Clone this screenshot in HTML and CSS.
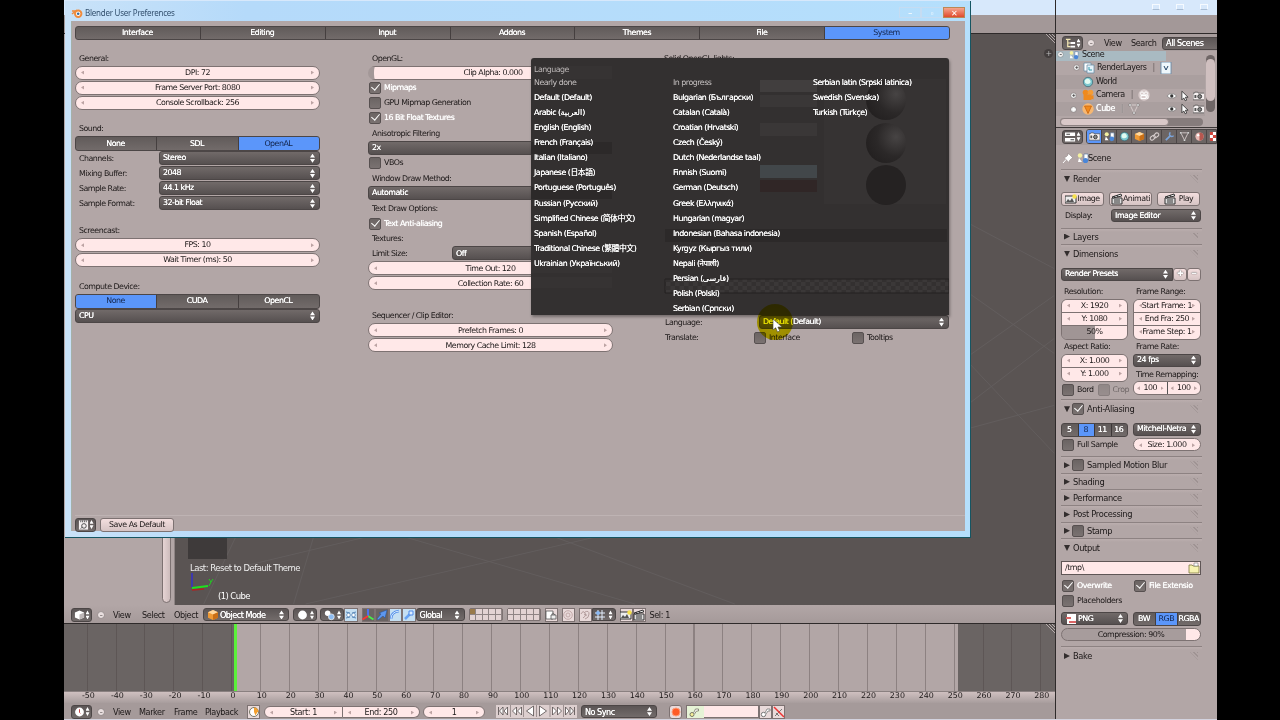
FILE: index.html
```html
<!DOCTYPE html>
<html lang="en">
<head>
  <meta charset="UTF-8">
  <title>Blender User Preferences</title>
  <link rel="stylesheet" href="styles.css">
</head>
<body>
  <!-- icons -->
  <svg class="defs">
    <symbol id="i-blender" viewBox="0 0 12 12"><path d="M1 7l5-4M1 4h6" stroke="#f08b3c" stroke-width="1.5"/><circle cx="7.2" cy="6.8" r="3.2" fill="#fff" stroke="#f08b3c" stroke-width="2"/><circle cx="7.2" cy="6.8" r="1.3" fill="#356a9c"/></symbol>
    <symbol id="i-camera" viewBox="0 0 12 12"><path d="M0 3h1.500l.5-1h3l.5 1H12v7H0z" fill="#f6f1f1" stroke="#444" stroke-width=".7"/><circle cx="7" cy="6.500" r="2" fill="#888" stroke="#333"/><path d="M1.500 5h2v3h-2z" fill="#555"/></symbol>
    <symbol id="i-prefs" viewBox="0 0 12 12"><path d="M1 1h10v10H1z" fill="#f6f1f1"/><path d="M3 1v2M5 1v2M7 1v2M9 1v2" stroke="#555"/><circle cx="6.500" cy="7" r="2.500" fill="none" stroke="#444"/><path d="M3 10l2-2" stroke="#444"/></symbol>
    <symbol id="i-image" viewBox="0 0 12 12"><path d="M0 3h11v7H0z" fill="#eee" stroke="#333"/><path d="M1 9l2-3 2 2 2-3 2 4z" fill="#555"/><circle cx="9.500" cy="3.500" r="2.200" fill="#f6e14d"/></symbol>
    <symbol id="i-clap" viewBox="0 0 12 12"><path d="M1 5h10v6H1z" fill="#ddd" stroke="#333"/><path d="M1 4l9-3 .7 2L2 5z" fill="#eee" stroke="#333"/><path d="M3 3l1 2M6 2l1 2M3 7h6M3 9h6" stroke="#333"/></symbol>
    <symbol id="i-scene" viewBox="0 0 12 12"><path d="M7 2h4v6H7z" fill="#fff" stroke="#4d6f9c" stroke-width=".6"/><circle cx="3" cy="3.500" r="2.200" fill="#f4f0a0"/><circle cx="8.500" cy="8.500" r="2.600" fill="#4a86d8"/><path d="M2 6l3 4H1z" fill="#fff"/></symbol>
    <symbol id="i-layers" viewBox="0 0 12 12"><path d="M1 1h7v8H1z" fill="#fff" stroke="#6d8fa8" stroke-width=".8"/><path d="M4 3h7v8H4z" fill="#e6f3fb" stroke="#6d8fa8" stroke-width=".8"/><path d="M6 5v3h3" stroke="#39a" fill="none"/></symbol>
    <symbol id="i-photo" viewBox="0 0 12 12"><path d="M1 0h10v12H1z" fill="#eef7fc" stroke="#5f87a5" stroke-width=".8"/><path d="M4 4l2 4 2-4" stroke="#246" fill="none"/></symbol>
    <symbol id="i-world" viewBox="0 0 12 12"><circle cx="6" cy="6" r="4.700" fill="#7cc7cf" stroke="#35626e" stroke-width=".7"/><path d="M3 4q3-3 5 0t-2 4q-4 0-3-4" fill="#e2fbf2"/></symbol>
    <symbol id="i-cube" viewBox="0 0 12 12"><path d="M6 1l5 2.300v5.500L6 11 1 8.800V3.300z" fill="#ef9a35"/><path d="M6 1l5 2.300L6 5.500 1 3.300z" fill="#ffd9a0"/><path d="M6 5.500V11l5-2.200V3.300z" fill="#c96f16"/></symbol>
    <symbol id="i-whitecube" viewBox="0 0 12 12"><path d="M6 1l5 2.300v5.500L6 11 1 8.800V3.300z" fill="#fff"/><path d="M6 5.500V11l5-2.200V3.300z" fill="#bdb6b6"/></symbol>
    <symbol id="i-cam" viewBox="0 0 12 12"><circle cx="3.500" cy="3.500" r="2.800" fill="#ef8a1e"/><circle cx="8.500" cy="3.500" r="2.800" fill="#f59c35"/><path d="M1.500 5.500h8v5.500h-8zM9 7l2.500-1v4.500L9 9.500z" fill="#ef8a1e"/></symbol>
    <symbol id="i-camdata" viewBox="0 0 12 12"><circle cx="6" cy="6" r="5.700" fill="#d9cccc"/><circle cx="4" cy="4.500" r="1.600" fill="none" stroke="#fff"/><circle cx="8" cy="4.500" r="1.600" fill="none" stroke="#fff"/><path d="M3 6.500h5v3H3zM8 7.500l2-1v3l-2-1" fill="none" stroke="#fff"/></symbol>
    <symbol id="i-mesh" viewBox="0 0 12 12"><path d="M2 2h8L6 10z" fill="none" stroke="#d6cccc"/><path d="M1 1h2v2H1zM9 1h2v2H9zM5 9h2v2H5z" fill="#fff" stroke="#555" stroke-width=".4"/></symbol>
    <symbol id="i-obj" viewBox="0 0 12 12"><circle cx="6" cy="6" r="5.700" fill="#f6b772"/><path d="M2.500 3h7L6 10.500z" fill="#f28a1d" stroke="#c9640c" stroke-width=".8"/></symbol>
    <symbol id="i-eye" viewBox="0 0 12 12"><path d="M1 6q5-5 10 0-5 5-10 0z" fill="#fff" stroke="#555" stroke-width=".5"/><circle cx="6" cy="6" r="1.700" fill="#333"/></symbol>
    <symbol id="i-cursor" viewBox="0 0 12 12"><path d="M3 1v9l2-2 1.500 3 1.500-.7L6.700 7.300H9.500z" fill="#fff" stroke="#222" stroke-width=".8"/></symbol>
    <symbol id="i-link" viewBox="0 0 12 12"><path d="M2 9.500a2 2 0 0 1 0-3l2-1.500a2 2 0 0 1 3 2L5 9a2 2 0 0 1-3 .5zM10 2.500a2 2 0 0 1 0 3L8 7a2 2 0 0 1-3-2l2-2a2 2 0 0 1 3-.5z" fill="none" stroke="#d3caca" stroke-width="1.200"/></symbol>
    <symbol id="i-wrench" viewBox="0 0 12 12"><path d="M2 10l5-5" stroke="#7ba3d8" stroke-width="2"/><path d="M7 1.500a2.500 2.500 0 1 0 3.500 3.500" fill="none" stroke="#7ba3d8" stroke-width="1.600"/></symbol>
    <symbol id="i-mat" viewBox="0 0 12 12"><circle cx="6" cy="6" r="4.500" fill="#e8b9b4"/><path d="M6 1.500a4.500 4.500 0 0 1 0 9z" fill="#b6574f"/><circle cx="4.500" cy="4.500" r="1.300" fill="#fff"/></symbol>
    <symbol id="i-check" viewBox="0 0 12 12"><path d="M1 1h10v10H1z" fill="#fff"/><path d="M1 1h3.300v3.300H1zM7.700 1H11v3.300H7.700zM4.300 4.300h3.400v3.400H4.300zM1 7.700h3.300V11H1zM7.700 7.700H11V11H7.700z" fill="#d1453b"/></symbol>
    <symbol id="i-tree" viewBox="0 0 12 12"><path d="M1 2h5M3 2v8h3M3 6h3" stroke="#f5e9b6" stroke-width="1.300" fill="none"/><path d="M6 5h5v2H6zM6 9h5v2H6z" fill="#fff"/></symbol>
    <symbol id="i-props" viewBox="0 0 12 12"><path d="M0 1h11v4H0zM0 7h11v4H0z" fill="#fff"/><path d="M1.500 3h4M6 9h4" stroke="#444" stroke-width="1.300"/></symbol>
    <symbol id="i-pin" viewBox="0 0 12 12"><path d="M1 11l3.500-4" stroke="#fff"/><path d="M6 1l5 5-1.500.5-2 2L7 10.500 2 5.500l2-.5 2-2z" fill="#fff" stroke="#8a7f7f" stroke-width=".5"/></symbol>
    <symbol id="i-clock" viewBox="0 0 12 12"><circle cx="6" cy="6" r="4.800" fill="#fff"/><path d="M6 3v3.500l1 1" stroke="#b33" fill="none"/></symbol>
    <symbol id="i-sphere" viewBox="0 0 12 12"><circle cx="6" cy="6" r="4.800" fill="#fff"/></symbol>
    <symbol id="i-pivot" viewBox="0 0 12 12"><circle cx="4" cy="4" r="3" fill="#fff"/><circle cx="8" cy="8" r="3.200" fill="#8ebcf0" stroke="#fff" stroke-width=".7"/></symbol>
    <symbol id="i-center" viewBox="0 0 12 12"><path d="M1 3l4 1M11 3L7 4M1 9l4-1M11 9L7 8" stroke="#5a87b8"/><circle cx="3.500" cy="6" r="1.800" fill="#fff" stroke="#5a87b8" stroke-width=".8"/><circle cx="8.500" cy="6" r="1.800" fill="#fff" stroke="#5a87b8" stroke-width=".8"/></symbol>
    <symbol id="i-manip" viewBox="0 0 12 12"><path d="M6 7V0" stroke="#4d72ff" stroke-width="1.800"/><path d="M6 7l5.500 3.500" stroke="#4bec4b" stroke-width="2"/><path d="M6 7L.5 10.500" stroke="#f33" stroke-width="2"/></symbol>
    <symbol id="i-arrow" viewBox="0 0 12 12"><path d="M1 10l4-5-2-1 8-3-2 8-2-2-5 4z" fill="#5d97ef" stroke="#234f9c" stroke-width=".5"/></symbol>
    <symbol id="i-arc" viewBox="0 0 12 12"><path d="M2 10Q2 3 10 2" fill="none" stroke="#4d89e8" stroke-width="2.500"/><path d="M2 10Q2 3 10 2" fill="none" stroke="#d8ecff"/></symbol>
    <symbol id="i-scale" viewBox="0 0 12 12"><path d="M2 10l5-5" stroke="#69a3f2" stroke-width="2.500"/><path d="M6 2h4v4H6z" fill="#dcecff" stroke="#4d89e8"/></symbol>
    <symbol id="i-lock" viewBox="0 0 12 12"><path d="M1 2h7v8H1z" fill="#fff" stroke="#555" stroke-width=".8"/><path d="M6 6h5v4H6z" fill="#eee" stroke="#555" stroke-width=".8"/><path d="M7 6q0-4 3 0" fill="none" stroke="#555" stroke-width=".8"/></symbol>
    <symbol id="i-ring" viewBox="0 0 12 12"><circle cx="6" cy="6" r="4.300" fill="none" stroke="#c3a9a9"/><circle cx="6" cy="6" r="2" fill="none" stroke="#c3a9a9"/></symbol>
    <symbol id="i-magnet" viewBox="0 0 12 12"><path d="M2 5q2-4 4-1T4 9M6 3q4-2 4 2T6 10M5 6q3-2 2 1" fill="none" stroke="#b39c9c"/></symbol>
    <symbol id="i-grid" viewBox="0 0 12 12"><path d="M4 1v10M8 1v10M1 4h10M1 8h10" stroke="#e6f0ff" stroke-width="1"/><circle cx="4" cy="4" r="2" fill="#8ab8f4"/></symbol>
    <symbol id="i-folder" viewBox="0 0 12 12"><path d="M1 3h3l1 1h6v7H1z" fill="#f7f2b0" stroke="#7c7740" stroke-width=".8"/><path d="M6 1h4v3H6z" fill="#fff" stroke="#777" stroke-width=".6"/></symbol>
    <symbol id="i-png" viewBox="0 0 12 12"><path d="M2 1h9v10H2z" fill="#fff"/><path d="M1 4h5v2H1zM4 8h7v2H4z" fill="#d66"/></symbol>
    <symbol id="i-key" viewBox="0 0 12 12"><circle cx="3.500" cy="8.500" r="2.200" fill="#fff" stroke="#777"/><path d="M5 7l2-4h3v2H8L6 8" fill="#fff" stroke="#777" stroke-width=".8"/></symbol>
    <symbol id="i-keyset" viewBox="0 0 17 12"><path d="M0 0h17v12H0z" fill="#e6f3d6"/><circle cx="5" cy="8.500" r="2" fill="#f7f29a" stroke="#776"/><path d="M6.500 7l2-4h3v2h-2l-2 3" fill="#fff" stroke="#776" stroke-width=".8"/></symbol>
    <symbol id="i-rec" viewBox="0 0 12 12"><circle cx="6" cy="6" r="4" fill="#ff5a26" stroke="#ff9a77"/></symbol>
    <symbol id="i-range" viewBox="0 0 12 12"><circle cx="6" cy="6" r="4.500" fill="#fff" stroke="#776" stroke-width="1"/><path d="M6 6V1.500A4.500 4.500 0 0 1 10.500 6zM6 6H9.500L7.500 9.500z" fill="#f4a030"/></symbol>
    <symbol id="i-grip" viewBox="0 0 9 9"><path d="M0 0l9 9M3 0l6 6M6 0l3 3" stroke="#d8cece" stroke-width=".7"/><path d="M1.500 0L9 7.500M4.500 0L9 4.500" stroke="#4a4444" stroke-width=".7"/></symbol>
  </svg>

  <div class="screen">
    <div class="main-row">
      <div class="left-area">
        <div class="aero-bar"></div>
        <div class="info-bar"></div>
        <div class="viewport">
          <div class="shelf"><div class="shelf-scroll"></div></div>
          <div class="view3d">
            <svg class="floor" width="880" height="572" viewBox="0 0 880 572">
              <g stroke="#625d5d" stroke-width="1" fill="none">
                <path d="M795 190L880 235M795 322L880 262M795 370L880 305M795 395L880 372M795 330L880 420M795 260L880 320"/>
                <path d="M28 571L60 504M118 571L138 504M60 535L190 504M130 571L420 504M230 504L460 571M380 504L560 571"/>
              </g>
            </svg>
            <svg class="grip"><use href="#i-grip"/></svg>
            <div class="ghost-box"></div>
            <span class="plus-tab">+</span>
            <div class="last-op">Last: Reset to Default Theme</div>
            <svg class="axis" width="32" height="28" viewBox="0 0 32 28"><path d="M3 16V2" stroke="#3430c8" stroke-width="1.500"/><path d="M3 19l12-1" stroke="#b32020" stroke-width="1.500"/><path d="M3 17l16-2" stroke="#1fe01f" stroke-width="1.800"/><path d="M20 8l2 3 2-3M22 11l-2 4" stroke="#1fd01f" fill="none"/></svg>
            <div class="obj-name">(1) Cube</div>
          </div>
        </div>
        <div class="view-header">
          <span class="select ed"><svg><use href="#i-whitecube"/></svg></span>
          <span class="minus">–</span>
          <span class="menu m-view">View</span><span class="menu m-select">Select</span><span class="menu m-object">Object</span>
          <span class="select mode"><svg><use href="#i-cube"/></svg>Object Mode</span>
          <span class="select shade"><svg><use href="#i-sphere"/></svg></span>
          <span class="select pivot"><svg><use href="#i-pivot"/></svg></span>
          <span class="ib sky"><svg><use href="#i-center"/></svg></span>
          <span class="ib dk first"><svg><use href="#i-manip"/></svg></span>
          <span class="ib dk"><svg><use href="#i-arrow"/></svg></span>
          <span class="ib sky"><svg><use href="#i-arc"/></svg></span>
          <span class="ib sky"><svg><use href="#i-scale"/></svg></span>
          <span class="select global">Global</span>
          <span class="layers"><i class="on"></i><i></i><i></i><i></i><i></i><i></i><i></i><i></i><i></i><i></i></span>
          <span class="layers second"><i></i><i></i><i></i><i></i><i></i><i></i><i></i><i></i><i></i><i></i></span>
          <span class="ib g4"><svg><use href="#i-lock"/></svg></span>
          <span class="ib g4"><svg><use href="#i-ring"/></svg></span>
          <span class="ib g4"><svg><use href="#i-magnet"/></svg></span>
          <span class="select snap"><svg><use href="#i-grid"/></svg></span>
          <span class="ib g4"><svg><use href="#i-image"/></svg></span>
          <span class="ib"><svg><use href="#i-clap"/></svg></span>
          <span class="menu sel">Sel: 1</span>
        </div>
        <div class="timeline">
          <div class="before"></div><div class="cursor"></div><div class="range"></div><div class="after"></div>
          <svg class="grip"><use href="#i-grip"/></svg>
        </div>
        <div class="ruler">
          <span>-50</span><span>-40</span><span>-30</span><span>-20</span><span>-10</span><span>0</span><span>10</span><span>20</span><span>30</span><span>40</span><span>50</span><span>60</span><span>70</span><span>80</span><span>90</span><span>100</span><span>110</span><span>120</span><span>130</span><span>140</span><span>150</span><span>160</span><span>170</span><span>180</span><span>190</span><span>200</span><span>210</span><span>220</span><span>230</span><span>240</span><span>250</span><span>260</span><span>270</span><span>280</span>
        </div>
        <div class="time-header">
          <span class="select ed"><svg><use href="#i-clock"/></svg></span>
          <span class="minus">–</span>
          <span class="menu m-view">View</span><span class="menu m-marker">Marker</span><span class="menu m-frame">Frame</span><span class="menu m-play">Playback</span>
          <span class="ib range-btn"><svg><use href="#i-range"/></svg></span>
          <span class="num t-start">Start: 1</span><span class="num t-end">End: 250</span>
          <span class="num t-cur">1</span>
          <span class="play">
            <svg viewBox="0 0 80 12"><path d="M14 0v12M27 0v12M40 0v12M53.500 0v12M67 0v12" stroke="#8d8282" stroke-width=".8"/><g fill="#fff" stroke="#544d4d" stroke-width=".8"><path d="M2 2v8M6.500 2L3 6l3.500 4zM11 2L7.500 6l3.500 4zM20 2l-4 4 4 4zM25 2l-4 4 4 4zM37 1l-7 5 7 5zM43 1l7 5-7 5zM56 2l4 4-4 4zM61 2l4 4-4 4zM69 2l3.500 4-3.500 4zM73.500 2L77 6l-3.500 4zM78 2v8"/></g></svg>
          </span>
          <span class="select sync">No Sync</span>
          <span class="ib rec"><svg><use href="#i-rec"/></svg></span>
          <span class="keyset"><svg><use href="#i-keyset"/></svg></span>
          <span class="ib"><svg><use href="#i-key"/></svg></span>
          <span class="ib last"><svg viewBox="0 0 12 12"><path d="M2 10l7-7M3 7l3 3" stroke="#777"/><path d="M1 1l10 10" stroke="#e33" stroke-width="1.500"/></svg></span>
        </div>
      </div>

      <div class="side">
        <div class="aero-bar"><i></i><i></i><i></i></div>
        <div class="info-bar"></div>
        <div class="out-header">
          <span class="select ed"><svg><use href="#i-tree"/></svg></span>
          <span class="minus">–</span>
          <span class="menu s-view">View</span><span class="menu s-search">Search</span>
          <span class="select scenes">All Scenes</span>
        </div>
        <div class="outliner">
          <div class="tree">
            <div class="node scene"><b class="dot">–</b><svg><use href="#i-scene"/></svg>Scene</div>
            <div class="node n1"><b class="dot">+</b><svg><use href="#i-layers"/></svg>RenderLayers <em>|</em><svg><use href="#i-photo"/></svg></div>
            <div class="node n2"><svg><use href="#i-world"/></svg>World</div>
            <div class="node n3"><b class="dot">+</b><svg><use href="#i-cam"/></svg>Camera <em>|</em><svg><use href="#i-camdata"/></svg><span class="eyes"><svg><use href="#i-eye"/></svg><svg><use href="#i-cursor"/></svg><svg><use href="#i-camera"/></svg></span></div>
            <div class="node n3 white"><b class="dot">+</b><svg><use href="#i-obj"/></svg>Cube <em>|</em><svg><use href="#i-mesh"/></svg><span class="eyes"><svg><use href="#i-eye"/></svg><svg><use href="#i-cursor"/></svg><svg><use href="#i-camera"/></svg></span></div>
            <div class="hscroll"><i></i></div>
          </div>
          <div class="vscroll"><i></i></div>
        </div>
        <div class="prop-header">
          <span class="select ed"><svg><use href="#i-props"/></svg></span>
          <span class="tabs">
            <i class="active"><svg><use href="#i-camera"/></svg></i><i><svg><use href="#i-scene"/></svg></i><i><svg><use href="#i-world"/></svg></i><i><svg><use href="#i-cube"/></svg></i><i><svg><use href="#i-link"/></svg></i><i><svg><use href="#i-wrench"/></svg></i><i><svg><use href="#i-mesh"/></svg></i><i><svg><use href="#i-mat"/></svg></i><i><svg><use href="#i-check"/></svg></i>
          </span>
        </div>
        <div class="panels">
          <div class="context"><svg><use href="#i-pin"/></svg><svg><use href="#i-scene"/></svg>Scene</div>
          <section class="panel render">
            <h3 class="open">Render</h3>
            <div class="btns"><span class="btn"><svg><use href="#i-image"/></svg>Image</span><span class="btn"><svg><use href="#i-clap"/></svg>Animati</span><span class="btn play-btn"><svg><use href="#i-clap"/></svg>Play</span></div>
            <div class="line"><label>Display:</label><span class="select grow">Image Editor</span></div>
          </section>
          <section class="panel"><h3>Layers</h3></section>
          <section class="panel dims">
            <h3 class="open">Dimensions</h3>
            <div class="line presets"><span class="select grow">Render Presets</span><span class="btn sq">✚</span><span class="btn sq">━</span></div>
            <div class="cols">
              <div>
                <label>Resolution:</label>
                <div class="stack"><span class="num">X: 1920</span><span class="num">Y: 1080</span><span class="num half">50%</span></div>
                <label>Aspect Ratio:</label>
                <div class="stack"><span class="num">X: 1.000</span><span class="num">Y: 1.000</span></div>
                <div class="line crop"><span class="cb">Bord</span><span class="cb off">Crop</span></div>
              </div>
              <div>
                <label>Frame Range:</label>
                <div class="stack"><span class="num">Start Frame: 1</span><span class="num">End Fra: 250</span><span class="num">Frame Step: 1</span></div>
                <label>Frame Rate:</label>
                <span class="select">24 fps</span>
                <label class="remap">Time Remapping:</label>
                <div class="stack pair"><span class="num">100</span><span class="num">100</span></div>
              </div>
            </div>
          </section>
          <section class="panel aa">
            <h3 class="open"><span class="cb on"></span>Anti-Aliasing</h3>
            <div class="cols">
              <div><div class="seg"><span>5</span><span class="active">8</span><span>11</span><span>16</span></div><div class="line"><span class="cb">Full Sample</span></div></div>
              <div><span class="select">Mitchell-Netra</span><span class="num size">Size: 1.000</span></div>
            </div>
          </section>
          <section class="panel"><h3><span class="cb"></span>Sampled Motion Blur</h3></section>
          <section class="panel"><h3>Shading</h3></section>
          <section class="panel"><h3>Performance</h3></section>
          <section class="panel"><h3>Post Processing</h3></section>
          <section class="panel"><h3><span class="cb"></span>Stamp</h3></section>
          <section class="panel output">
            <h3 class="open">Output</h3>
            <div class="path"><span>/tmp\</span><svg><use href="#i-folder"/></svg></div>
            <div class="cols checks"><span class="cb on">Overwrite</span><span class="cb on">File Extensio</span></div>
            <div class="checks"><span class="cb">Placeholders</span></div>
            <div class="cols"><span class="select png"><svg><use href="#i-png"/></svg>PNG</span><div class="seg"><span>BW</span><span class="active">RGB</span><span>RGBA</span></div></div>
            <div class="slider">Compression: 90%</div>
          </section>
          <section class="panel bake"><h3>Bake</h3></section>
        </div>
      </div>
    </div>
  </div>

  <!-- preferences window -->
  <div class="window">
    <div class="titlebar">
      <svg class="logo"><use href="#i-blender"/></svg><span class="title">Blender User Preferences</span>
      <span class="wb">–</span><span class="wb">▫</span><span class="wb close">✕</span>
    </div>
    <div class="client">
      <div class="seg top-tabs"><span>Interface</span><span>Editing</span><span>Input</span><span>Addons</span><span>Themes</span><span>File</span><span class="active">System</span></div>
      <div class="pref-cols">
        <div class="pcol c1">
          <div class="group">
            <label>General:</label>
            <span class="num">DPI: 72</span><span class="num">Frame Server Port: 8080</span><span class="num">Console Scrollback: 256</span>
          </div>
          <div class="group">
            <label>Sound:</label>
            <div class="seg"><span>None</span><span>SDL</span><span class="active">OpenAL</span></div>
            <div class="row"><label>Channels:</label><span class="select">Stereo</span></div>
            <div class="row"><label>Mixing Buffer:</label><span class="select">2048</span></div>
            <div class="row"><label>Sample Rate:</label><span class="select">44.1 kHz</span></div>
            <div class="row"><label>Sample Format:</label><span class="select">32-bit Float</span></div>
          </div>
          <div class="group">
            <label>Screencast:</label>
            <span class="num">FPS: 10</span><span class="num">Wait Timer (ms): 50</span>
          </div>
          <div class="group">
            <label>Compute Device:</label>
            <div class="seg"><span class="active">None</span><span>CUDA</span><span>OpenCL</span></div>
            <span class="select">CPU</span>
          </div>
        </div>
        <div class="pcol c2">
          <div class="group">
            <label>OpenGL:</label>
            <span class="num clip">Clip Alpha: 0.000</span>
            <span class="cb on">Mipmaps</span>
            <span class="cb">GPU Mipmap Generation</span>
            <span class="cb on">16 Bit Float Textures</span>
            <label>Anisotropic Filtering</label>
            <span class="select">2x</span>
            <span class="cb">VBOs</span>
            <label>Window Draw Method:</label>
            <span class="select">Automatic</span>
            <label>Text Draw Options:</label>
            <span class="cb on">Text Anti-aliasing</span>
            <label>Textures:</label>
            <div class="row"><label>Limit Size:</label><span class="select">Off</span></div>
            <span class="num">Time Out: 120</span>
            <span class="num">Collection Rate: 60</span>
          </div>
          <div class="group">
            <label>Sequencer / Clip Editor:</label>
            <span class="num">Prefetch Frames: 0</span>
            <span class="num">Memory Cache Limit: 128</span>
          </div>
        </div>
        <div class="pcol c3">
          <label>Solid OpenGL lights:</label>
          <div class="lang">
            <div class="row"><label>Language:</label><span class="select">Default (Default)</span></div>
            <div class="row translate"><label>Translate:</label><span class="cb">Interface</span><span class="cb">Tooltips</span></div>
          </div>
        </div>
      </div>
      <div class="pref-footer"><span class="select ed"><svg><use href="#i-prefs"/></svg></span><span class="btn">Save As Default</span></div>
    </div>

    <div class="popup">
      <svg class="under" width="418" height="256" viewBox="0 0 418 256">
        <defs>
          <radialGradient id="ball" cx=".75" cy=".35" r=".8"><stop offset="0" stop-color="#474444"/><stop offset=".6" stop-color="#2b2828"/><stop offset="1" stop-color="#232020"/></radialGradient>
          <pattern id="chk" width="9" height="8" patternUnits="userSpaceOnUse"><path d="M0 0h4.500v4H0zM4.500 4H9v4H4.500z" fill="#3b3838"/></pattern>
        </defs>
        <path d="M0 8h81v13H0zM0 204h81v11H0zM0 219h81v11H0z" fill="#363333"/>
        <path d="M0 84h81v12H0zM0 129h81v12H0zM134 171h282v13H134z" fill="#2c2929"/>
        <path d="M293 21h122v125H293z" fill="#363333"/>
        <path d="M229 22h57v12h-57z" fill="#413e3e"/>
        <path d="M229 37h57v12h-57zM229 65h57v13h-57z" fill="#3a3737"/>
        <path d="M229 107h57v13h-57z" fill="#42474a"/><path d="M229 122h57v12h-57z" fill="#302626"/>
        <circle cx="355" cy="42" r="20" fill="url(#ball)"/><circle cx="355" cy="85" r="20" fill="url(#ball)"/><circle cx="355" cy="127" r="20" fill="#252222"/>
        <path d="M134 221h284v14H134z" fill="url(#chk)" stroke="#242121"/>
      </svg>
      <div class="pop-title">Language</div>
      <div class="pop-cols">
        <ul>
          <li class="head">Nearly done</li><li>Default (Default)</li><li>Arabic (العربية)</li><li>English (English)</li><li>French (Français)</li><li>Italian (Italiano)</li><li>Japanese (日本語)</li><li>Portuguese (Português)</li><li>Russian (Русский)</li><li>Simplified Chinese (简体中文)</li><li>Spanish (Español)</li><li>Traditional Chinese (繁體中文)</li><li>Ukrainian (Український)</li>
        </ul>
        <ul>
          <li class="head">In progress</li><li>Bulgarian (Български)</li><li>Catalan (Català)</li><li>Croatian (Hrvatski)</li><li>Czech (Český)</li><li>Dutch (Nederlandse taal)</li><li>Finnish (Suomi)</li><li>German (Deutsch)</li><li>Greek (Ελληνικά)</li><li>Hungarian (magyar)</li><li>Indonesian (Bahasa indonesia)</li><li>Kyrgyz (Кыргыз тили)</li><li>Nepali (नेपाली)</li><li>Persian (فارسی)</li><li>Polish (Polski)</li><li>Serbian (Српски)</li>
        </ul>
        <ul>
          <li>Serbian latin (Srpski latinica)</li><li>Swedish (Svenska)</li><li>Turkish (Türkçe)</li>
        </ul>
      </div>
    </div>
    <div class="halo"></div>
    <svg class="pointer" width="12" height="16" viewBox="0 0 12 16"><path d="M1 1v11l2.700-2.300L5.500 14l2.200-1-1.800-4H10z" fill="#fff" stroke="#443" stroke-width=".6"/></svg>
  </div>
</body>
</html>
```
FILE: styles.css
```css
* {
  box-sizing: border-box;
}
body {
  margin: 0;
  background: #000;
  width: 1280px;
  height: 720px;
  overflow: hidden;
  position: relative;
  font-family: "DejaVu Sans", "Noto Sans CJK SC", "Noto Sans", sans-serif;
  font-size: 7.9px;
  letter-spacing: -0.5px;
  line-height: 12px;
  color: #1c1818;
  white-space: nowrap;
}
i, em {
  font-style: normal;
}
svg {
  width: 12px;
  height: 12px;
  flex: none;
}
.defs {
  position: absolute;
  width: 0;
  height: 0;
}
.screen {
  width: 1153px;
  height: 720px;
  margin-left: 64px;
  background: #b2a6a6;
  border-bottom: 1px solid #d3d3df;
}
.main-row {
  display: flex;
  height: 719px;
}
.left-area {
  width: 992px;
  display: flex;
  flex-direction: column;
  border-right: 1px solid #2e2a2a;
}
.aero-bar {
  height: 15px;
  background: #d7e8fb;
  display: flex;
  justify-content: flex-end;
  gap: 16px;
  padding: 4px 9px 0 0;
  flex: none;
}
.aero-bar i {
  width: 8px;
  height: 6px;
  border: 1px solid #f5faff;
  border-bottom-color: #a9bdd4;
}
.info-bar {
  height: 19px;
  background: #a39898;
  border-bottom: 1px solid #2e2a2a;
  flex: none;
}

/* widgets */
.select {
  display: flex;
  align-items: center;
  position: relative;
  height: 13px;
  padding: 0 3px;
  border: 1px solid #4c4646;
  border-radius: 3px;
  background: linear-gradient(#5b5555, #726b6a);
  color: #fff;
  text-shadow: 0 0 .6px #fff;
}
.pcol .select, .panels .select {
  background: linear-gradient(#716a69, #565050);
}
.select::after {
  content: "";
  position: absolute;
  right: 4px;
  top: 50%;
  margin-top: -4.5px;
  width: 5px;
  height: 9px;
  background: #fff;
  clip-path: polygon(50% 0, 100% 42%, 0 42%, 0 58%, 100% 58%, 50% 100%, 0 58%, 0 42%);
}
.num {
  display: flex;
  align-items: center;
  justify-content: center;
  position: relative;
  height: 13px;
  background: #ffe8e8;
  border: 1px solid #7d7272;
  border-radius: 7px;
}
.num::before, .num::after {
  content: "";
  position: absolute;
  top: 4px;
  width: 3px;
  height: 4px;
  background: #bda4a4;
}
.num::before {
  left: 5px;
  clip-path: polygon(0 50%, 100% 0, 100% 100%);
}
.num::after {
  right: 5px;
  clip-path: polygon(100% 50%, 0 0, 0 100%);
}
.seg {
  display: flex;
  height: 14px;
  border: 1px solid #4c4646;
  border-radius: 3px;
  overflow: hidden;
  background: linear-gradient(#615b5a, #726b6a);
}
.seg span {
  flex: 1;
  display: flex;
  align-items: center;
  justify-content: center;
  padding-right: 1px;
  color: #fff;
  text-shadow: 0 0 .6px #fff;
  border-left: 1px solid #453f3f;
}
.seg span:first-child {
  border-left: 0;
}
.seg .active {
  background: #5b96fa;
  color: #13254c;
  text-shadow: none;
}
.cb {
  display: flex;
  align-items: center;
  position: relative;
}
.cb::before {
  content: "";
  width: 10px;
  height: 10px;
  margin-right: 3px;
  border: 1px solid #575050;
  border-radius: 2px;
  background: linear-gradient(#6b6463, #7a7271);
}
.cb.on {
  color: #fff;
  text-shadow: 0 0 .8px #fff;
}
.cb.on::after {
  content: "";
  position: absolute;
  left: 4px;
  top: 50%;
  width: 4px;
  height: 7px;
  margin-top: -6px;
  border: solid #fff;
  border-width: 0 1.5px 1.5px 0;
  transform: rotate(40deg);
}
.pcol .cb.on::after {
  left: 5px;
}
.cb.off {
  opacity: .45;
}
.btn {
  display: flex;
  align-items: center;
  justify-content: center;
  height: 14px;
  border: 1px solid #7d7272;
  border-radius: 3px;
  background: linear-gradient(#f3dede, #d6c4c4);
}
.minus {
  width: 6px;
  height: 6px;
  line-height: 5px;
  text-align: center;
  border-radius: 50%;
  background: #e8dede;
  box-shadow: 0 0 1px #555;
  font-size: 6px;
}
.ib {
  width: 13px;
  height: 14px;
  border: 1px solid #7d7272;
  background: #e9dada;
  display: flex;
  align-items: center;
  justify-content: center;
}
.ib.sky {
  background: #c5dff2;
}
.ib.dk {
  background: #6a6362;
}
.ed {
  width: 21px;
  height: 14px;
  padding: 0 2px;
}
.ed::after {
  right: 1.5px;
  width: 4px;
}
.ed svg {
  width: 11px;
}
.grip {
  position: absolute;
  right: 0;
  top: 0;
  width: 9px;
  height: 9px;
  z-index: 2;
}

/* 3d view */
.viewport {
  height: 571px;
  display: flex;
}
.shelf {
  width: 111px;
  background: #b2a6a6;
  border-right: 1px solid #8f8585;
  display: flex;
  justify-content: flex-end;
  padding: 0 3px 2px 0;
}
.shelf-scroll {
  width: 9px;
  border: 1px solid #7d7272;
  border-radius: 5px;
  background: linear-gradient(90deg, #e6d4d4, #cdbcbc);
}
.view3d {
  flex: 1;
  background: #5a5453;
  position: relative;
}
.floor {
  width: 880px;
  height: 571px;
}
.ghost-box {
  position: absolute;
  left: 13px;
  top: 500px;
  width: 39px;
  height: 25px;
  background: #3e3a3a;
}
.plus-tab {
  position: absolute;
  right: 2px;
  top: 15px;
  width: 9px;
  height: 9px;
  line-height: 9px;
  text-align: center;
  border-radius: 50%;
  background: #433e3e;
  color: #bbb;
}
.last-op, .obj-name {
  position: absolute;
  color: #efefef;
  font-size: 8.5px;
}
.last-op {
  left: 15px;
  top: 528px;
}
.obj-name {
  left: 43px;
  top: 556px;
  letter-spacing: -.6px;
  color: #fff;
}
.axis {
  position: absolute;
  left: 14px;
  top: 537px;
  width: 32px;
  height: 28px;
}
.view-header, .time-header {
  display: flex;
  align-items: center;
  height: 19px;
  padding-left: 7px;
  background: linear-gradient(#b2a6a6, #a59a9a);
  font-size: 8.1px;
  letter-spacing: -.4px;
}
.view-header > *, .time-header > *, .out-header > * {
  flex: none;
}
.view-header {
  padding-top: 2px;
  border-bottom: 1px solid #2e2a2a;
}
.view-header .minus, .time-header .minus {
  margin-left: 6px;
}
.m-view { width: 29px; margin-left: 9px; }
.m-select { width: 32px; }
.m-object { width: 29px; }
.mode { width: 86px; }
.mode svg { margin-right: 1px; }
.mode, .global, .sync { letter-spacing: -.5px; }
.shade { width: 24px; margin-left: 4px; }
.pivot { width: 24px; margin-left: 3px; }
.shade svg, .pivot svg { width: 11px; }
.shade::after, .pivot::after, .snap::after { right: 2px; width: 4px; }
.ib.sky, .ib.dk { width: 13.5px; }
.ib.first { margin-left: 4px; }
.global { width: 49px; }
.layers {
  display: grid;
  grid-template-columns: repeat(5, 1fr);
  width: 34px;
  height: 13px;
  margin-left: 4px;
  border: 1px solid #7d7272;
  border-radius: 2px;
  background: #8f8484;
  gap: 1px;
}
.layers i {
  background: #e3d3d3;
}
.layers .on {
  background: #9a7a4a;
}
.g4 { margin-left: 4px; }
.snap { width: 24px; padding: 0 1px; border-radius: 0 3px 3px 0; }
.sel { margin-left: 4px; }

/* timeline */
.timeline {
  height: 68px;
  display: flex;
  position: relative;
}
.timeline::after {
  content: "";
  position: absolute;
  inset: 0;
  background: repeating-linear-gradient(90deg, transparent 0 22.6px, rgba(70, 60, 60, .35) 22.6px 23.6px, transparent 23.6px 28.9px);
}
.timeline .before { width: 170px; background: #6a6463; }
.timeline .cursor { width: 3px; background: #5bf03a; z-index: 1; }
.timeline .range { width: 721px; background: #b2a6a6; }
.timeline .after { flex: 1; background: #6a6463; }
.ruler {
  height: 12px;
  display: flex;
  background: linear-gradient(#cfc0c0, #a89d9d);
  border-top: 1px solid #8a8080;
  padding-left: 10px;
  overflow: hidden;
  letter-spacing: 0;
  line-height: 8px;
}
.ruler span {
  width: 28.9px;
  flex: none;
  text-align: center;
}
.time-header {
  height: 16px;
  padding-top: 1px;
  background: #a59a9a;
}
.time-header .m-view { width: 26px; }
.m-marker { width: 35px; }
.m-frame { width: 31px; }
.m-play { width: 42px; }
.time-header .num { height: 12px; }
.t-start { width: 79px; margin-left: 4px; border-radius: 7px 0 0 7px; }
.t-end { width: 77px; border-left: 0; border-radius: 0 7px 7px 0; }
.t-cur { width: 62px; margin-left: 3px; }
.play {
  display: flex;
  width: 81px;
  height: 13px;
  margin-left: 11px;
  background: #ddcfcf;
}
.play svg { width: 81px; }
.sync { width: 76px; margin-left: 4px; }
.rec { margin-left: 12px; border-radius: 3px; }
.keyset {
  display: flex;
  width: 73px;
  height: 13px;
  margin-left: 4px;
  border: 1px solid #7d7272;
  background: #ffe8e8;
}
.keyset svg { width: 17px; }

/* right column */
.side {
  flex: 1;
  min-width: 0;
  overflow: hidden;
  background: #b2a6a6;
}
.out-header {
  display: flex;
  align-items: center;
  height: 17px;
  padding: 1px 0 0 6px;
  background: #a89d9d;
  font-size: 8.1px;
  letter-spacing: -.4px;
}
.out-header .minus { margin-left: 5px; }
.s-view { width: 27px; margin-left: 10px; }
.s-search { width: 31px; }
.scenes { width: 60px; }
.scenes::after { display: none; }
.outliner {
  display: flex;
  height: 77px;
  border-bottom: 1px solid #3c3737;
  font-size: 8px;
  letter-spacing: -.45px;
}
.tree {
  width: 149px;
}
.node {
  display: flex;
  align-items: center;
  height: 13.8px;
  position: relative;
}
.node:nth-child(odd) { background: #aa9f9f; }
.node svg { margin: 0 2px 0 4px; }
.node em { margin: 0 1px 0 6px; color: #6a6060; }
.node.scene {
  height: 10px;
  width: 110px;
  padding-bottom: 3px;
  background: #a9bac2;
}
.scene svg { height: 10px; }
.dot {
  width: 5px;
  height: 5px;
  margin-left: 2px;
  line-height: 4px;
  font-size: 5px;
  text-align: center;
  border-radius: 50%;
  background: #eee;
  box-shadow: 0 0 1px #333;
}
.scene .dot { margin-right: 1px; }
.n1 .dot { margin-left: 18px; }
.n2 { padding-left: 22px; }
.n3 .dot { margin-left: 15px; margin-right: 2px; }
.node.white { color: #fff; text-shadow: 0 0 .8px #fff; }
.eyes {
  position: absolute;
  right: 1px;
  top: 1px;
  display: flex;
  gap: 2px;
}
.node .eyes svg { margin: 0; width: 11.5px; }
.hscroll {
  width: 143px;
  height: 8px;
  margin: 2px 0 0 4px;
  border-radius: 4px;
  background: #867c7c;
}
.hscroll i {
  display: block;
  width: 109px;
  height: 8px;
  border-radius: 4px;
  background: #d9c8c8;
  border: 1px solid #8c8181;
}
.vscroll {
  width: 9px;
  height: 57px;
  margin: 4px 0 0 1px;
  padding-top: 4px;
  border-radius: 5px;
  background: #6f6666;
}
.vscroll i {
  display: block;
  height: 42px;
  border-radius: 5px;
  background: #d0c0c0;
}
.prop-header {
  display: flex;
  align-items: center;
  height: 17px;
  padding-left: 6px;
  background: #a89d9d;
}
.prop-header .ed { flex: none; }
.tabs {
  display: flex;
  margin-left: 3px;
  border: 1px solid #4c4646;
  border-radius: 3px 0 0 3px;
  overflow: hidden;
}
.tabs i {
  width: 15px;
  height: 13px;
  display: flex;
  flex: none;
  align-items: center;
  justify-content: center;
  background: #6c6564;
  border-right: 1px solid #4c4646;
}
.tabs .active { background: #5b96fa; }
.tabs svg { width: 11px; height: 11px; }
.panels {
  width: 141px;
  margin-left: 5px;
  letter-spacing: -.45px;
}
.context {
  display: flex;
  align-items: center;
  gap: 3px;
  height: 24px;
  padding: 2px 0 0 1px;
  font-size: 8.2px;
}
.context svg:nth-child(2) { margin-right: -4px; }
.panel {
  height: 16.35px;
  border-top: 1px solid #8d8282;
  background: linear-gradient(#bbaeae, #b2a6a6 3px);
}
.panel h3 {
  display: flex;
  align-items: center;
  margin: 0;
  height: 16px;
  padding-left: 3px;
  font-size: 8.3px;
  font-weight: normal;
  letter-spacing: -.34px;
}
.panel h3::before {
  content: "";
  width: 6px;
  height: 6px;
  margin-right: 3px;
  background: #332e2e;
  clip-path: polygon(0 0, 100% 50%, 0 100%);
}
.panel h3.open::before {
  clip-path: polygon(0 0, 100% 0, 50% 100%);
}
.panel h3::after {
  content: "";
  width: 8px;
  height: 8px;
  margin: 0 4px 0 auto;
  background: repeating-linear-gradient(45deg, rgba(90, 80, 80, .22) 0 1px, transparent 1px 2.5px);
  clip-path: polygon(0 0, 100% 0, 100% 100%);
}
.panel h3 .cb { margin-left: -1px; }
.panel .line { display: flex; align-items: center; }
.panel .grow { flex: 1; margin-left: 17px; }
.render { height: 58.5px; }
.render h3 { height: 18px; }
.btns { display: flex; gap: 5px; margin: 4px 0 3px; }
.btns .btn { width: 43px; gap: 0; }
.btns .play-btn { gap: 3px; }
.render label { padding-left: 4px; width: 33px; }
.render .line, .dims .line, .cols { width: 140px; }
.dims { height: 155px; }
.dims h3 { height: 18px; margin-bottom: 5px; }
.presets .grow { margin: 0; border-radius: 3px 0 0 3px; }
.sq { width: 14px; height: 13px; color: #fff; text-shadow: 0 0 1px #000; }
.cols { display: grid; grid-template-columns: 67px 68px; gap: 5px; }
.cols label { display: block; padding-left: 3px; }
.dims .cols label { height: 13.7px; line-height: 13px; }
.dims .cols { margin-top: 4px; }
.stack { border: 1px solid #7d7272; border-radius: 6px; overflow: hidden; }
.stack .num {
  height: 13.1px;
  border: 0;
  border-radius: 0;
  border-bottom: 1px solid #7d7272;
}
.stack .num:last-child { border-bottom: 0; }
.num.half { background: linear-gradient(90deg, #a09595 50%, #ffe8e8 50%); }
.num.half::before, .num.half::after { display: none; }
.crop { margin-top: 2px; gap: 4px; padding-left: 1px; }
.dims .cols .remap { margin-top: 1px; }
.pair { display: flex; }
.pair .num { flex: 1; height: 11.5px; border-bottom: 0; }
.pair .num::before { left: 3px; }
.pair .num::after { right: 3px; }
.pair .num:first-child { border-right: 1px solid #555; }
.aa { height: 57.5px; }
.aa h3 { height: 19px; margin-bottom: 4px; }
.aa .seg span { border-color: #3b3636; }
.aa .line { height: 16px; padding-left: 1px; }
.size { margin-top: 2.5px; }
.output { height: 108px; }
.output h3 { height: 18px; margin-bottom: 4px; }
.path {
  display: flex;
  justify-content: space-between;
  align-items: center;
  width: 140px;
  height: 14px;
  padding-left: 3px;
  border: 1px solid #5f5656;
  background: #ffe8e8;
}
.checks { height: 15px; padding-left: 1px; margin-top: 1px; }
.checks .cb { height: 15px; }
.output .cols.checks { margin-top: 3px; }
.output .checks + .checks { margin-top: 0; }
.output > .cols:not(.checks) { margin-top: 4px; }
.png svg { margin-right: 1px; }
.slider {
  width: 140px;
  height: 13px;
  margin-top: 1.5px;
  text-align: center;
  line-height: 12px;
  border: 1px solid #7d7272;
  border-radius: 7px;
  background: linear-gradient(90deg, #a79c9c 90%, #ffe8e8 90%);
}
.bake h3 { height: 18px; }

/* preferences window */
.window {
  position: absolute;
  left: 65px;
  top: 1px;
  width: 906px;
  height: 537px;
  padding: 0 5px 7px 6px;
  background: linear-gradient(90deg, #c9e2f8, #b5dafa 20%, #b5dffc);
  border: solid #155562;
  border-width: 0 1px 1px 0;
}
.titlebar {
  display: flex;
  height: 20px;
  padding-top: 6px;
  line-height: 12px;
  font-family: "Noto Sans", sans-serif;
  font-size: 8px;
  letter-spacing: -.25px;
  color: #33506e;
}
.logo { margin-right: 2px; }
.title { flex: 1; }
.wb {
  width: 22px;
  height: 11px;
  line-height: 10px;
  text-align: center;
  border: 1px solid #c5dcf2;
  color: #fff;
}
.wb.close {
  background: linear-gradient(#f5a58e, #e04a2c);
  border-color: #b85;
}
.client {
  height: 510px;
  background: #b2a6a6;
  border-left: 1px solid #a5b0a8;
  padding: 5px 0 0 3px;
}
.top-tabs { width: 875px; }
.pref-cols {
  display: flex;
  height: 475px;
  padding-top: 10.5px;
}
.pcol { width: 245px; margin-right: 48px; }
.c3 { width: 285px; margin: 0 0 0 3px; }
.group { margin-bottom: 11.6px; }
.c2 .group { margin-bottom: 17.9px; }
.pcol label { display: block; height: 15.05px; line-height: 15px; padding-left: 4px; }
.c3 label { padding-left: 0; }
.pcol .num, .pcol .select { height: 14px; margin-bottom: 1.05px; }
.c2 .num, .c2 .select { padding-top: 1px; }
.pcol .seg { height: 15.05px; }
.pcol .cb { height: 15.05px; padding-left: 1px; }
.pcol .row { display: flex; }
.pcol .row label { width: 84px; }
.pcol .row .select { flex: 1; }
.pcol.c3 .row label { width: 95px; padding-left: 1px; }
.pcol.c3 .translate label { width: 100px; }
.c3 .row .cb { width: 98px; flex: none; }
.lang { margin-top: 249.5px; }
.clip { border-left-width: 6px; border-left-color: #a39898; }
.clip::before { display: none; }
.pref-footer {
  display: flex;
  align-items: center;
  gap: 4px;
  height: 16px;
  padding-top: 2px;
  border-top: 1px solid #beb3b3;
}
.pref-footer .btn { width: 74px; letter-spacing: -.45px; }

.popup {
  position: absolute;
  left: 466px;
  top: 57px;
  width: 418px;
  height: 257px;
  background: #333030;
  border-radius: 3px 3px 0 0;
  color: #fff;
  box-shadow: 1px 2px 3px rgba(0, 0, 0, .35);
}
.under {
  position: absolute;
  left: 0;
  top: 0;
  width: 418px;
  height: 256px;
}
.pop-title {
  position: relative;
  padding: 4px 0 0 3px;
  height: 17px;
  line-height: 15px;
  color: #bbb6b6;
}
.pop-cols {
  position: relative;
  display: grid;
  grid-template-columns: 139px 140px 1fr;
  padding-left: 3px;
}
.pop-cols ul {
  margin: 0;
  padding: 0;
  list-style: none;
}
.pop-cols li {
  height: 15.07px;
  line-height: 15.4px;
  text-shadow: 0 0 .6px #fff;
}
.pop-cols .head {
  color: #c5c0c0;
  text-shadow: none;
}
.halo {
  position: absolute;
  left: 692px;
  top: 303px;
  width: 36px;
  height: 36px;
  border-radius: 50%;
  background: radial-gradient(#f0e800, #d8d000);
  mix-blend-mode: multiply;
}
.pointer {
  position: absolute;
  left: 707px;
  top: 317px;
  width: 12px;
  height: 16px;
}
```
